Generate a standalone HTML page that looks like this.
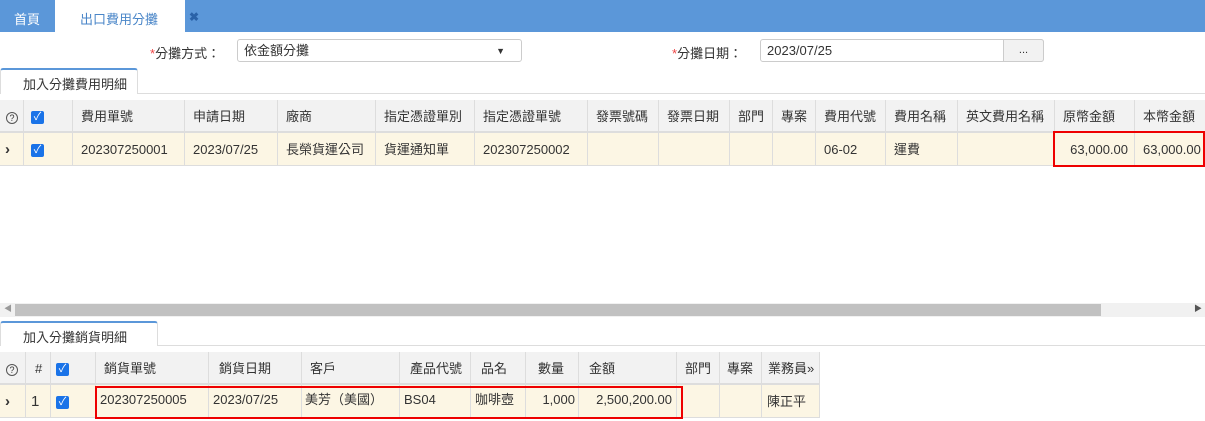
<!DOCTYPE html>
<html><head><meta charset="utf-8"><style>
*{box-sizing:border-box;margin:0;padding:0}
body{width:1205px;height:421px;overflow:hidden;background:#fff;font-family:"Liberation Sans","Noto Sans CJK TC",sans-serif;font-size:13px;color:#333;position:relative}
.a{position:absolute}
.top{left:0;top:0;width:1205px;height:32px;background:#5b97d9}
.cell{position:absolute;border-right:1px solid #ddd;height:33px;line-height:33px;padding-left:8px;white-space:nowrap;overflow:hidden}
.hd{background:#f2f2f2;border-bottom:2px solid #ddd}
.rw{background:#fcf6e4;border-bottom:1px solid #ddd}
.cb{display:inline-block;width:13px;height:13px;background:#1a73e8;border-radius:2px;color:#fff;font-size:11px;line-height:13px;text-align:center;vertical-align:middle}
.q{display:inline-block;width:12px;height:12px;border:1px solid #555;border-radius:50%;font-size:9px;line-height:10px;text-align:center;vertical-align:middle}
.r{text-align:right;padding-right:6px;padding-left:0}
.inp{line-height:21px;padding:0 6px}
</style></head><body>
<div class="a top"></div>
<div class="a" style="left:14px;top:9px;color:#fff;font-size:13px">首頁</div>
<div class="a" style="left:55px;top:0;width:130px;height:32px;background:#fff"></div>
<div class="a" style="left:80px;top:9px;color:#4a86c8">出口費用分攤</div>
<div class="a" style="left:189px;top:10px;color:#2a62a8;font-weight:bold;font-size:12px">✖</div>

<div class="a" style="left:150px;top:43px"><span style="color:#e44">*</span>分攤方式：</div>
<div class="a inp" style="left:237px;top:39px;width:285px;height:23px;border:1px solid #ccc;border-radius:3px">依金額分攤<span style="position:absolute;right:16px;top:1px;font-size:9px">▼</span></div>
<div class="a" style="left:672px;top:43px"><span style="color:#e44">*</span>分攤日期：</div>
<div class="a inp" style="left:760px;top:39px;width:284px;height:23px;border:1px solid #ccc;border-radius:3px">2023/07/25</div>
<div class="a" style="left:1003px;top:39px;width:41px;height:23px;border:1px solid #ccc;border-radius:0 3px 3px 0;background:#f2f2f2;text-align:center;font-size:11px;line-height:20px">...</div>

<div class="a" style="left:0;top:93px;width:1205px;border-top:1px solid #ddd"></div>
<div class="a" style="left:0;top:68px;width:138px;height:26px;background:#fff;border:1px solid #ddd;border-top:2px solid #5b97d9;border-bottom:none;border-radius:3px 3px 0 0;padding:4px 0 0 22px">加入分攤費用明細</div>

<div class="cell hd" style="left:0;top:100px;width:24px;padding-left:6px"><span class="q">?</span></div>
<div class="cell hd" style="left:24px;top:100px;width:49px;padding-left:7px"><span class="cb">✓</span></div>
<div class="cell hd" style="left:73px;top:100px;width:112px">費用單號</div>
<div class="cell hd" style="left:185px;top:100px;width:93px">申請日期</div>
<div class="cell hd" style="left:278px;top:100px;width:98px">廠商</div>
<div class="cell hd" style="left:376px;top:100px;width:99px">指定憑證單別</div>
<div class="cell hd" style="left:475px;top:100px;width:113px">指定憑證單號</div>
<div class="cell hd" style="left:588px;top:100px;width:71px">發票號碼</div>
<div class="cell hd" style="left:659px;top:100px;width:71px">發票日期</div>
<div class="cell hd" style="left:730px;top:100px;width:43px">部門</div>
<div class="cell hd" style="left:773px;top:100px;width:43px">專案</div>
<div class="cell hd" style="left:816px;top:100px;width:70px">費用代號</div>
<div class="cell hd" style="left:886px;top:100px;width:72px">費用名稱</div>
<div class="cell hd" style="left:958px;top:100px;width:97px">英文費用名稱</div>
<div class="cell hd" style="left:1055px;top:100px;width:80px">原幣金額</div>
<div class="cell hd" style="left:1135px;top:100px;width:80px">本幣金額</div>

<div class="cell rw" style="left:0;top:133px;width:24px;padding-left:5px;font-weight:bold;font-size:15px">›</div>
<div class="cell rw" style="left:24px;top:133px;width:49px;padding-left:7px"><span class="cb">✓</span></div>
<div class="cell rw" style="left:73px;top:133px;width:112px">202307250001</div>
<div class="cell rw" style="left:185px;top:133px;width:93px">2023/07/25</div>
<div class="cell rw" style="left:278px;top:133px;width:98px">長榮貨運公司</div>
<div class="cell rw" style="left:376px;top:133px;width:99px">貨運通知單</div>
<div class="cell rw" style="left:475px;top:133px;width:113px">202307250002</div>
<div class="cell rw" style="left:588px;top:133px;width:71px"></div>
<div class="cell rw" style="left:659px;top:133px;width:71px"></div>
<div class="cell rw" style="left:730px;top:133px;width:43px"></div>
<div class="cell rw" style="left:773px;top:133px;width:43px"></div>
<div class="cell rw" style="left:816px;top:133px;width:70px">06-02</div>
<div class="cell rw" style="left:886px;top:133px;width:72px">運費</div>
<div class="cell rw" style="left:958px;top:133px;width:97px"></div>
<div class="cell rw r" style="left:1055px;top:133px;width:80px">63,000.00</div>
<div class="cell rw" style="left:1135px;top:133px;width:80px;padding-left:8px">63,000.00</div>
<div class="a" style="left:1053px;top:131px;width:152px;height:36px;border:2px solid #e00"></div>

<div class="a" style="left:0;top:303px;width:1205px;height:14px;background:#f1f1f1"></div>
<div class="a" style="left:15px;top:304px;width:1086px;height:12px;background:#c1c1c1"></div>
<div class="a" style="left:4px;top:303px;font-size:8px;color:#999">◀</div>
<div class="a" style="left:1194px;top:303px;font-size:8px;color:#555">▶</div>

<div class="a" style="left:0;top:345px;width:1205px;border-top:1px solid #ddd"></div>
<div class="a" style="left:0;top:321px;width:158px;height:25px;background:#fff;border:1px solid #ddd;border-top:2px solid #5b97d9;border-bottom:none;border-radius:3px 3px 0 0;padding:4px 0 0 22px">加入分攤銷貨明細</div>

<div class="cell hd" style="left:0;top:352px;width:26px;padding-left:6px"><span class="q">?</span></div>
<div class="cell hd" style="left:26px;top:352px;width:25px;padding-left:9px">#</div>
<div class="cell hd" style="left:51px;top:352px;width:45px;padding-left:5px"><span class="cb">✓</span></div>
<div class="cell hd" style="left:96px;top:352px;width:113px;padding-left:8px">銷貨單號</div>
<div class="cell hd" style="left:209px;top:352px;width:93px;padding-left:10px">銷貨日期</div>
<div class="cell hd" style="left:302px;top:352px;width:98px">客戶</div>
<div class="cell hd" style="left:400px;top:352px;width:71px;padding-left:10px">產品代號</div>
<div class="cell hd" style="left:471px;top:352px;width:55px;padding-left:10px">品名</div>
<div class="cell hd" style="left:526px;top:352px;width:53px;padding-left:12px">數量</div>
<div class="cell hd" style="left:579px;top:352px;width:98px;padding-left:10px">金額</div>
<div class="cell hd" style="left:677px;top:352px;width:43px">部門</div>
<div class="cell hd" style="left:720px;top:352px;width:42px;padding-left:7px">專案</div>
<div class="cell hd" style="left:762px;top:352px;width:58px;padding-left:6px">業務員»</div>

<div class="cell rw" style="left:0;top:385px;width:26px;padding-left:5px;font-weight:bold;font-size:15px">›</div>
<div class="cell rw" style="left:26px;top:385px;width:25px;padding-left:5px;font-size:15px">1</div>
<div class="cell rw" style="left:51px;top:385px;width:45px;padding-left:5px"><span class="cb">✓</span></div>
<div class="cell rw" style="left:96px;top:385px;width:113px;padding-left:4px;line-height:30px">202307250005</div>
<div class="cell rw" style="left:209px;top:385px;width:93px;padding-left:4px;line-height:30px">2023/07/25</div>
<div class="cell rw" style="left:302px;top:385px;width:98px;padding-left:3px;line-height:30px">美芳（美國）</div>
<div class="cell rw" style="left:400px;top:385px;width:71px;padding-left:4px;line-height:30px">BS04</div>
<div class="cell rw" style="left:471px;top:385px;width:55px;padding-left:4px;line-height:30px">咖啡壺</div>
<div class="cell rw r" style="left:526px;top:385px;width:53px;line-height:30px;padding-right:3px">1,000</div>
<div class="cell rw r" style="left:579px;top:385px;width:98px;line-height:30px;padding-right:4px">2,500,200.00</div>
<div class="cell rw" style="left:677px;top:385px;width:43px"></div>
<div class="cell rw" style="left:720px;top:385px;width:42px"></div>
<div class="cell rw" style="left:762px;top:385px;width:58px;padding-left:5px">陳正平</div>
<div class="a" style="left:95px;top:386px;width:588px;height:33px;border:2px solid #e00"></div>
</body></html>
